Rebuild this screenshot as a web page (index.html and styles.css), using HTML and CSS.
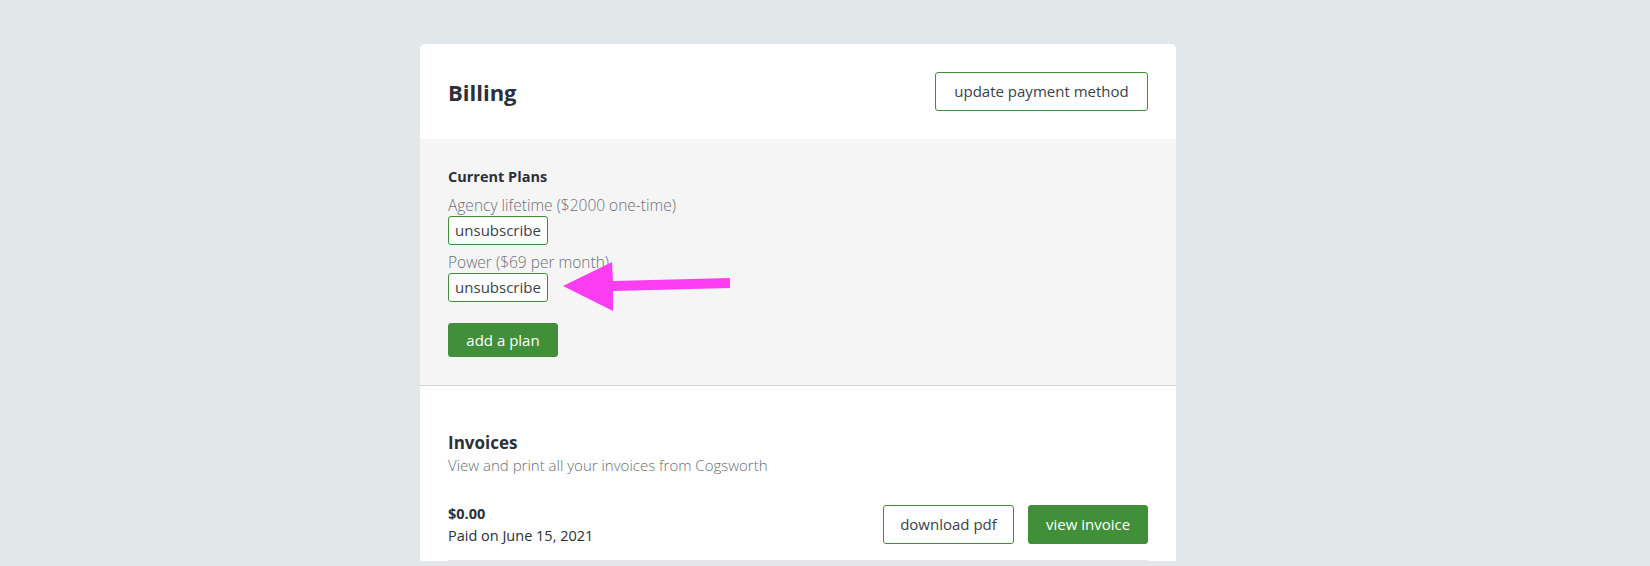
FILE: index.html
```html
<!DOCTYPE html>
<html lang="en">
<head>
<meta charset="utf-8">
<title>Billing</title>
<link rel="stylesheet" href="styles.css">
</head>
<body>
<main class="page">
  <section class="card">
    <header class="card-header">
      <h1 class="title">Billing</h1>
      <button class="btn btn-outline btn-lg">update payment method</button>
    </header>
    <div class="plans">
      <h2 class="plans-title">Current Plans</h2>
      <div class="plan">
        <div class="plan-name">Agency lifetime ($2000 one-time)</div>
        <button class="btn btn-outline btn-sm">unsubscribe</button>
      </div>
      <div class="plan plan-marked">
        <div class="plan-name">Power ($69 per month)</div>
        <button class="btn btn-outline btn-sm">unsubscribe</button>
        <svg class="arrow" width="180" height="60" viewBox="0 0 180 60" aria-hidden="true">
          <polygon points="0,24 49,0 50,19 167,16 167,26 50,29 50,49" fill="#fd3df2"/>
        </svg>
      </div>
      <button class="btn btn-solid btn-md add-plan">add a plan</button>
    </div>
    <div class="invoices">
      <h2 class="invoices-title">Invoices</h2>
      <p class="invoices-sub">View and print all your invoices from Cogsworth</p>
      <div class="invoice-row">
        <div class="invoice-info">
          <div class="amount">$0.00</div>
          <div class="paid">Paid on June 15, 2021</div>
        </div>
        <div class="invoice-actions">
          <button class="btn btn-outline btn-lg">download pdf</button>
          <button class="btn btn-solid btn-lg">view invoice</button>
        </div>
      </div>
    </div>
  </section>
</main>
</body>
</html>
```
FILE: styles.css
```css
* { box-sizing: border-box; }
html, body { margin: 0; }
body {
  background: #e2e7ea;
  font-family: "Open Sans", "Noto Sans", sans-serif;
  color: #2b303a;
}
.page {
  padding: 44px 0 0 420px;
}
.card {
  width: 756px;
  background: #fff;
  border-radius: 5px 5px 0 0;
  overflow: hidden;
}
.card-header {
  height: 95px;
  padding: 0 28px;
  display: flex;
  align-items: center;
  justify-content: space-between;
}
.title {
  margin: 0;
  font-size: 22px;
  font-weight: 700;
  color: #2b303a;
}
.btn {
  font-family: inherit;
  cursor: pointer;
  border-radius: 3px;
  border: 1px solid #3f8e37;
  padding: 0;
  line-height: 1;
}
.btn-outline { background: #fff; color: #3a3f4a; }
.btn-solid { background: #418f39; color: #fff; }
.btn-lg { height: 39px; font-size: 15px; padding: 0 16px; }
.btn-sm { height: 29px; font-size: 15px; padding: 0 6px; }
.btn-md { height: 34px; font-size: 15px; padding: 0 15px; }
.card-header .btn-lg { width: 213px; }

.plans {
  background: #f5f5f5;
  padding: 27px 28px 28px;
  border-bottom: 1px solid #d3d3d3;
}
.plans-title {
  margin: 0;
  font-size: 14.5px;
  line-height: 22px;
  font-weight: 700;
}
.plan { margin-top: 6px; display: flex; flex-direction: column; align-items: flex-start; }
.plan-marked { position: relative; }
.plan-name {
  font-size: 15.5px;
  line-height: 22px;
  font-weight: 300;
  color: #6b6f76;
}
.plan .btn-sm { width: 100px; }
.arrow {
  position: absolute;
  left: 115px;
  top: 11px;
}
.add-plan { margin-top: 21px; width: 110px; }

.invoices {
  padding: 45px 28px 0;
}
.invoices-title {
  margin: 0;
  font-size: 17px;
  line-height: 24px;
  font-weight: 700;
}
.invoices-sub {
  margin: 0;
  font-size: 15px;
  line-height: 20px;
  font-weight: 300;
  color: #6b6f76;
}
.invoice-row {
  margin-top: 14px;
  padding: 14px 0;
  border-bottom: 1px solid #e6e6e6;
  display: flex;
  align-items: center;
  justify-content: space-between;
}
.amount { font-size: 14.5px; line-height: 22px; font-weight: 700; }
.paid { font-size: 14.5px; line-height: 21px; font-weight: 400; }
.invoice-actions { display: flex; gap: 14px; }
.invoice-actions .btn-outline { width: 131px; }
.invoice-actions .btn-solid { width: 120px; }
```
